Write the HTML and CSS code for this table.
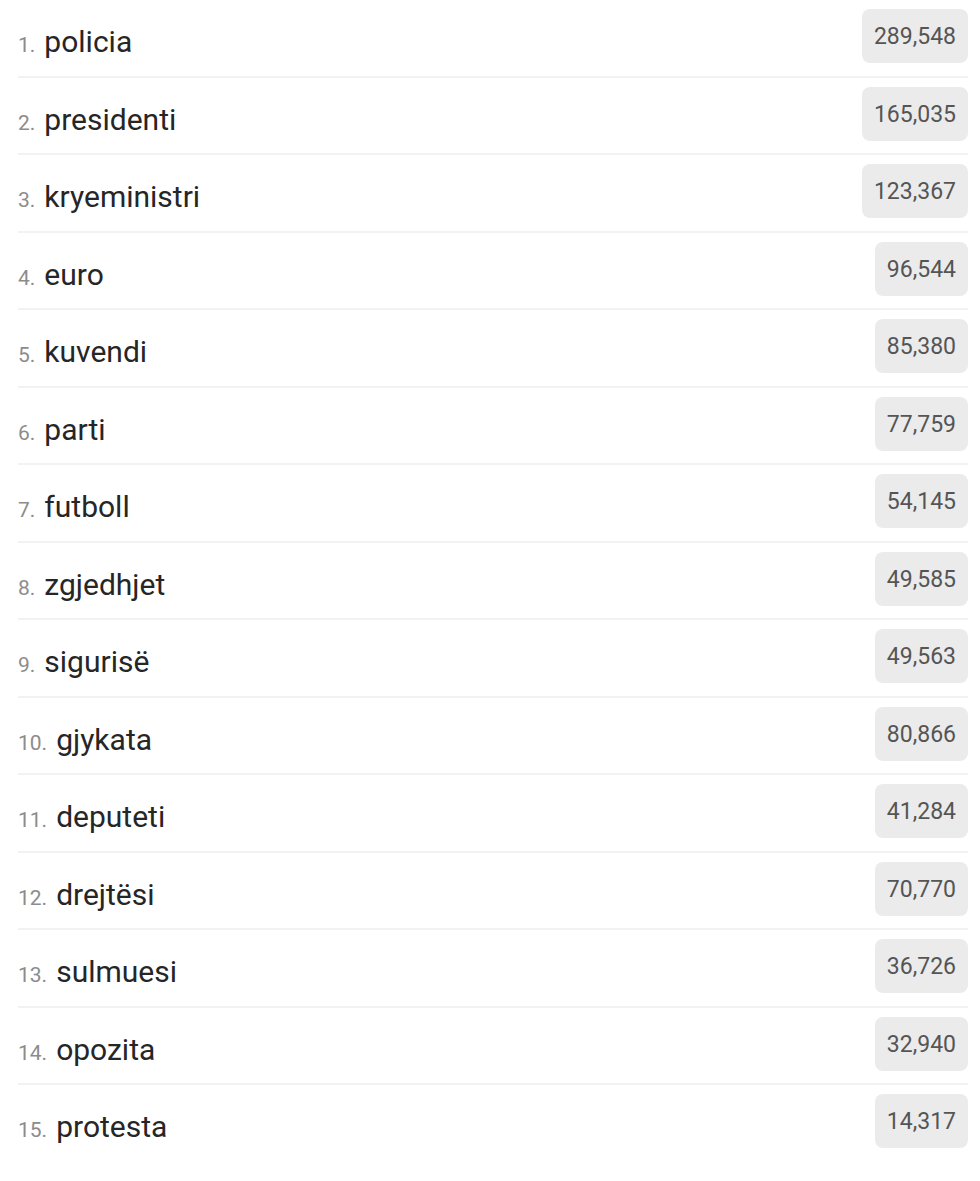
FILE: index.html
```html
<!DOCTYPE html>
<html>
<head>
<meta charset="utf-8">
<link rel="stylesheet" href="styles.css">
</head>
<body>
<ol class="list">
  <li class="row"><span class="label"><span class="num">1.</span><span class="term">policia</span></span><span class="badge">289,548</span></li>
  <li class="row"><span class="label"><span class="num">2.</span><span class="term">presidenti</span></span><span class="badge">165,035</span></li>
  <li class="row"><span class="label"><span class="num">3.</span><span class="term">kryeministri</span></span><span class="badge">123,367</span></li>
  <li class="row"><span class="label"><span class="num">4.</span><span class="term">euro</span></span><span class="badge">96,544</span></li>
  <li class="row"><span class="label"><span class="num">5.</span><span class="term">kuvendi</span></span><span class="badge">85,380</span></li>
  <li class="row"><span class="label"><span class="num">6.</span><span class="term">parti</span></span><span class="badge">77,759</span></li>
  <li class="row"><span class="label"><span class="num">7.</span><span class="term">futboll</span></span><span class="badge">54,145</span></li>
  <li class="row"><span class="label"><span class="num">8.</span><span class="term">zgjedhjet</span></span><span class="badge">49,585</span></li>
  <li class="row"><span class="label"><span class="num">9.</span><span class="term">sigurisë</span></span><span class="badge">49,563</span></li>
  <li class="row"><span class="label"><span class="num">10.</span><span class="term">gjykata</span></span><span class="badge">80,866</span></li>
  <li class="row"><span class="label"><span class="num">11.</span><span class="term">deputeti</span></span><span class="badge">41,284</span></li>
  <li class="row"><span class="label"><span class="num">12.</span><span class="term">drejtësi</span></span><span class="badge">70,770</span></li>
  <li class="row"><span class="label"><span class="num">13.</span><span class="term">sulmuesi</span></span><span class="badge">36,726</span></li>
  <li class="row"><span class="label"><span class="num">14.</span><span class="term">opozita</span></span><span class="badge">32,940</span></li>
  <li class="row"><span class="label"><span class="num">15.</span><span class="term">protesta</span></span><span class="badge">14,317</span></li>
</ol>
</body>
</html>
```

FILE: styles.css
```css
html, body {
  margin: 0;
  padding: 0;
  background: #ffffff;
}

body {
  font-family: Roboto, "Liberation Sans", Arial, sans-serif;
}

.list {
  list-style: none;
  margin: 0;
  padding: 0 12px 0 18px;
}

.row {
  display: flex;
  justify-content: space-between;
  align-items: flex-start;
  height: 75.5px;
  border-bottom: 2px solid #f2f2f2;
}

.row:last-child {
  border-bottom: none;
}

.label {
  margin-top: 26px;
  line-height: 32px;
  white-space: nowrap;
}

.num {
  font-size: 21px;
  color: #8c8c8c;
  margin-right: 9px;
}

.term {
  font-size: 30px;
  color: #262626;
}

.badge {
  margin-top: 9px;
  height: 54px;
  line-height: 55px;
  padding: 0 12px;
  background: #ebebeb;
  border-radius: 8px;
  font-size: 23px;
  color: #555555;
}
```
